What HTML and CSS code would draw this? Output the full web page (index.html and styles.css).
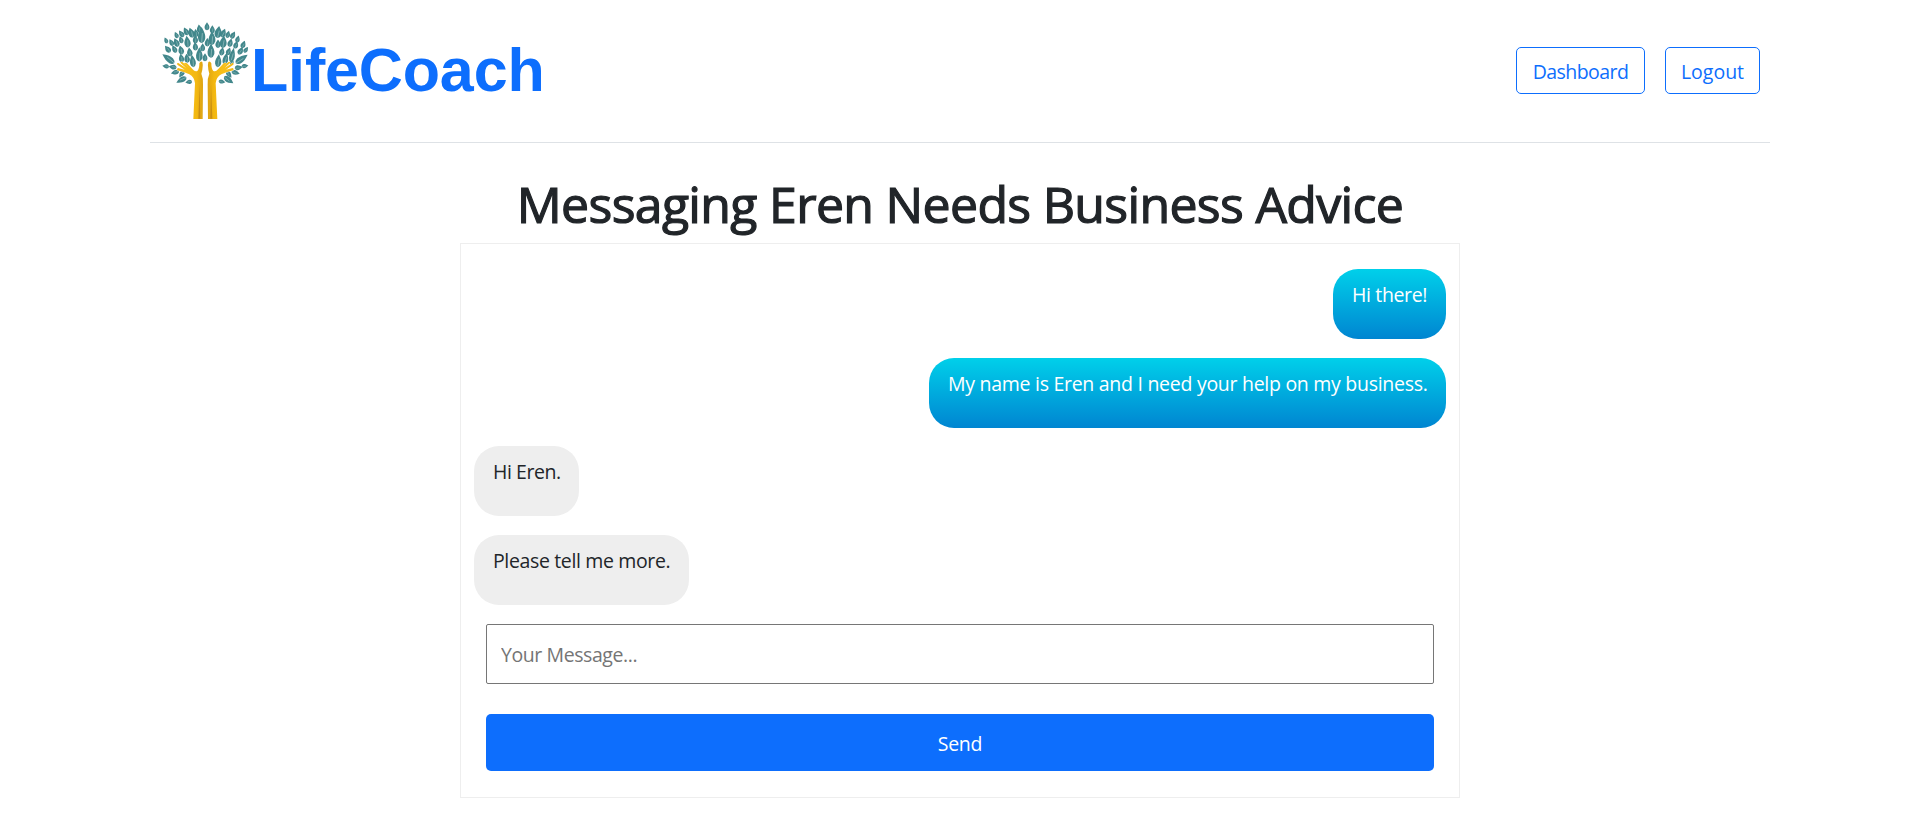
FILE: index.html
```html
<!DOCTYPE html>
<html lang="en">
<head>
<meta charset="utf-8">
<title>LifeCoach</title>
<link rel="stylesheet" href="styles.css">
</head>
<body>
<header class="header">
  <a class="brand">
    <svg class="tree" viewBox="0 0 330 345" aria-hidden="true">
      <defs>
        <g id="leaf"><path fill="#42878b" d="M0-17C7-7 12 0 10 8Q7 16 0 17Q-8 16-10 8C-12 0-7-7 0-17Z"/><path d="M2-4L0 16" stroke="#a9cccd" stroke-width="1.6"/></g>
        <linearGradient id="arm"><stop offset="0" stop-color="#f0b414"/><stop offset=".3" stop-color="#f8c01a"/><stop offset=".75" stop-color="#f3b811"/><stop offset="1" stop-color="#dda313"/></linearGradient>
      </defs>
      <use href="#leaf" transform="translate(171 49) scale(.7)"/>
      <use href="#leaf" transform="translate(148 56) rotate(-8) scale(.75)"/>
      <use href="#leaf" transform="translate(187 58) scale(.72)"/>
      <use href="#leaf" transform="translate(205 66) rotate(8) scale(1.05)"/>
      <use href="#leaf" transform="translate(138 69) rotate(-10) scale(.7)"/>
      <use href="#leaf" transform="translate(155 75) scale(1.05 1.4)"/>
      <use href="#leaf" transform="translate(124 68) rotate(-20) scale(.9)"/>
      <use href="#leaf" transform="translate(108 64) rotate(-28) scale(.75)"/>
      <use href="#leaf" transform="translate(94 71) rotate(-35) scale(.7)"/>
      <use href="#leaf" transform="translate(79 75) rotate(-25) scale(.6)"/>
      <use href="#leaf" transform="translate(220 69) rotate(22) scale(.8)"/>
      <use href="#leaf" transform="translate(234 73) rotate(15) scale(.65)"/>
      <use href="#leaf" transform="translate(249 75) rotate(28) scale(.7)"/>
      <use href="#leaf" transform="translate(263 87) rotate(15) scale(.65)"/>
      <use href="#leaf" transform="translate(186 84) scale(1 1.25)"/>
      <use href="#leaf" transform="translate(172 97) scale(.75)"/>
      <use href="#leaf" transform="translate(136 88) rotate(-5) scale(.75)"/>
      <use href="#leaf" transform="translate(112 95) rotate(-8) scale(.9 1.05)"/>
      <use href="#leaf" transform="translate(93 89) rotate(-20) scale(.65)"/>
      <use href="#leaf" transform="translate(79 97) rotate(-25) scale(.8)"/>
      <use href="#leaf" transform="translate(64 97) rotate(-30) scale(.65)"/>
      <use href="#leaf" transform="translate(48 91) rotate(-25) scale(.55)"/>
      <use href="#leaf" transform="translate(220 95) rotate(5) scale(1 1.1)"/>
      <use href="#leaf" transform="translate(241 98) rotate(15) scale(.75)"/>
      <use href="#leaf" transform="translate(258 104) rotate(18) scale(.7)"/>
      <use href="#leaf" transform="translate(280 103) rotate(22) scale(.7)"/>
      <use href="#leaf" transform="translate(204 101) scale(.75)"/>
      <use href="#leaf" transform="translate(158 112) scale(.7)"/>
      <use href="#leaf" transform="translate(136 109) rotate(-5) scale(.75)"/>
      <use href="#leaf" transform="translate(148 133) scale(.95 1.25)"/>
      <use href="#leaf" transform="translate(183 122) scale(1 1.25)"/>
      <use href="#leaf" transform="translate(165 142) scale(.7)"/>
      <use href="#leaf" transform="translate(93 120) rotate(-15) scale(.8)"/>
      <use href="#leaf" transform="translate(73 117) rotate(-30) scale(.7)"/>
      <use href="#leaf" transform="translate(53 117) rotate(-38) scale(.75)"/>
      <use href="#leaf" transform="translate(119 126) rotate(-8) scale(.8)"/>
      <use href="#leaf" transform="translate(216 124) rotate(12) scale(.75)"/>
      <use href="#leaf" transform="translate(236 124) rotate(20) scale(.7)"/>
      <use href="#leaf" transform="translate(272 122) rotate(28) scale(.75)"/>
      <use href="#leaf" transform="translate(288 119) rotate(35) scale(.6)"/>
      <use href="#leaf" transform="translate(94 144) rotate(-12) scale(.75)"/>
      <use href="#leaf" transform="translate(111 145) rotate(-8) scale(.8)"/>
      <use href="#leaf" transform="translate(128 153) rotate(-8) scale(.85 1.1)"/>
      <use href="#leaf" transform="translate(205 152) rotate(5) scale(.9 1.15)"/>
      <use href="#leaf" transform="translate(227 146) rotate(12) scale(.8 1.1)"/>
      <use href="#leaf" transform="translate(247 135) rotate(12) scale(.8 1.3)"/>
      <use href="#leaf" transform="translate(246 156) rotate(15) scale(.55)"/>
      <use href="#leaf" transform="translate(55 146) rotate(-54) scale(.9 1.3)"/>
      <use href="#leaf" transform="translate(47 169) rotate(-82) scale(.6)"/>
      <use href="#leaf" transform="translate(68 171) rotate(-82) scale(.7)"/>
      <use href="#leaf" transform="translate(275 147) rotate(54) scale(.9 1.3)"/>
      <use href="#leaf" transform="translate(285 168) rotate(82) scale(.6)"/>
      <use href="#leaf" transform="translate(266 173) rotate(82) scale(.7)"/>
      <use href="#leaf" transform="translate(75 187) rotate(-105) scale(.65 .75)"/>
      <use href="#leaf" transform="translate(95 192) rotate(-145) scale(.65 .75)"/>
      <use href="#leaf" transform="translate(94 210) rotate(-118) scale(.8 1)"/>
      <use href="#leaf" transform="translate(116 216) rotate(-100) scale(.6)"/>
      <use href="#leaf" transform="translate(257 188) rotate(105) scale(.65 .75)"/>
      <use href="#leaf" transform="translate(237 193) rotate(145) scale(.65 .75)"/>
      <use href="#leaf" transform="translate(236 210) rotate(125) scale(.8 1)"/>
      <use href="#leaf" transform="translate(216 215) rotate(100) scale(.6)"/>
      <g id="hand">
        <path fill="url(#arm)" stroke="#fff" stroke-width="2" paint-order="stroke" d="M130 327L135 220Q133 201 118 193Q102 186 82 181Q79 177 84 174L104 179L82 164Q79 158 85 159L108 174L91 158Q92 153 97 156L117 173L102 160Q105 156 111 160L128 178Q134 186 142 183Q148 177 148 160Q152 152 157 156Q160 165 157 179L154 191Q161 207 159 225L158 327Z"/>
        <path fill="#a56b16" opacity=".5" d="M149 225L145 326H151Z"/>
      </g>
      <use href="#hand" transform="matrix(-1 0 0 1 332 0)"/>
    </svg>
    <span class="brand-name">LifeCoach</span>
  </a>
  <nav class="nav">
    <a class="nav-button dashboard">Dashboard</a>
    <a class="nav-button logout">Logout</a>
  </nav>
</header>
<main class="main">
  <h1 class="title">Messaging Eren Needs Business Advice</h1>
  <section class="chat">
    <p class="message sent hi">Hi there!</p>
    <p class="message sent intro">My name is Eren and I need your help on my business.</p>
    <p class="message received reply">Hi Eren.</p>
    <p class="message received more">Please tell me more.</p>
    <form class="form">
      <input class="field" type="text" placeholder="Your Message...">
      <button class="send" type="button">Send</button>
    </form>
  </section>
</main>
</body>
</html>
```
FILE: styles.css
```css
* { box-sizing: border-box; }
body {
  margin: 0;
  background: #fff;
  color: #212529;
  font: 400 19.5px/30px "Open Sans", "Noto Sans", sans-serif;
  letter-spacing: -0.36px;
}
.header {
  width: 1620px;
  height: 143px;
  margin: 0 auto;
  padding: 10px 10px 0 0;
  border-bottom: 1px solid #dee2e6;
  display: flex;
  justify-content: space-between;
  align-items: flex-start;
}
.brand { display: flex; }
.tree { width: 110px; height: 115px; }
.brand-name {
  margin: 25px 0 0 -9px;
  color: #0d6efd;
  font: 700 61px/70px "Liberation Sans", Arial, sans-serif;
  letter-spacing: -0.15px;
}
.nav { display: flex; gap: 20px; margin-top: 37px; }
.nav-button {
  height: 47px;
  border: 1px solid #0d6efd;
  border-radius: 5px;
  color: #0d6efd;
  line-height: 48px;
  text-align: center;
  white-space: nowrap;
}
.dashboard { width: 129px; letter-spacing: -0.55px; }
.logout { width: 95px; letter-spacing: 0; }
.main { width: 1000px; margin: 0 auto; padding-top: 31px; }
.title {
  margin: 0 0 9px;
  font-size: 50px;
  font-weight: 500;
  line-height: 60px;
  letter-spacing: -0.68px;
  -webkit-text-stroke: 1.2px #212529;
  text-align: center;
  white-space: nowrap;
}
.chat {
  height: 555px;
  padding: 25px 13px 0;
  border: 1px solid #eee;
  display: flex;
  flex-direction: column;
}
.message {
  height: 70px;
  margin: 0 0 19px;
  padding: 11px 0 0 19px;
  border-radius: 25px;
  white-space: nowrap;
}
.sent {
  align-self: flex-end;
  color: #fff;
  background: linear-gradient(#00d0ea, #0085d1);
}
.received { align-self: flex-start; background: #eee; }
.hi { width: 113px; }
.intro { width: 517px; margin-bottom: 18px; letter-spacing: -0.28px; }
.reply { width: 105px; letter-spacing: -0.45px; }
.more { width: 215px; }
.form { display: flex; flex-direction: column; gap: 30px; padding: 0 12px; }
.field {
  height: 60px;
  padding: 1px 14px;
  border: 1px solid #767676;
  border-radius: 2px;
  background: #fff;
  font: inherit;
  letter-spacing: -0.42px;
}
.field::placeholder { color: #757575; }
.send {
  height: 57px;
  padding: 3px 0 0;
  border: 0;
  border-radius: 5px;
  background: #0d6efd;
  color: #fff;
  font: inherit;
  letter-spacing: -0.3px;
}
```
